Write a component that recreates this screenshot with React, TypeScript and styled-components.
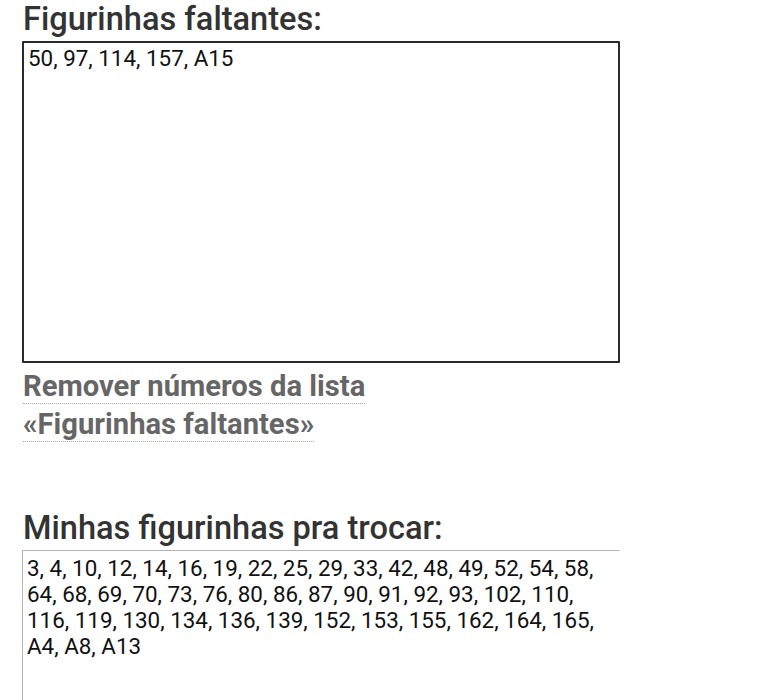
import React from "react";
import styled, { createGlobalStyle } from "styled-components";

const Global = createGlobalStyle`
  html, body { margin: 0; padding: 0; background: #fff; }
  body { font-family: Roboto, "Noto Sans", "Liberation Sans", sans-serif; color: #222; }
`;

const Page = styled.main`
  display: flex;
  flex-direction: column;
  padding: 0 0 0 22px;
  width: 598px;
`;

const Heading = styled.label<{ $top: number }>`
  display: block;
  font-size: 32.6px;
  font-weight: 500;
  line-height: 38px;
  color: #333;
  padding-left: 1px;
  margin: ${(p) => p.$top}px 0 3px;
`;

const Area = styled.textarea<{ $strong?: boolean; $height: number }>`
  box-sizing: border-box;
  width: 598px;
  height: ${(p) => p.$height}px;
  resize: none;
  margin: 0;
  font-family: Roboto, "Noto Sans", "Liberation Sans", sans-serif;
  font-size: 22.4px;
  line-height: 26px;
  color: #111;
  background: #fff;
  outline: none;
  overflow: hidden;
  ${(p) =>
    p.$strong
      ? `border: 2px solid #2a2a2a; border-radius: 1px; padding: 2px 4px;`
      : `border: 1px solid #b5b5b5; border-right-color: transparent; padding: 4px 4px;`}
`;

const RemoveLink = styled.a`
  align-self: flex-start;
  margin-top: 4px;
  padding-left: 1px;
  font-size: 29.2px;
  font-weight: 700;
  line-height: 38px;
  color: #666;
  text-decoration: none;
  cursor: pointer;
`;

const Dotted = styled.span`
  border-bottom: 1px dotted #aaa;
  padding-bottom: 0;
`;

export default function App() {
  return (
    <>
      <Global />
      <Page>
        <Heading $top={0}>Figurinhas faltantes:</Heading>
        <Area $strong $height={322} readOnly defaultValue="50, 97, 114, 157, A15" />
        <RemoveLink>
          <Dotted>Remover números da lista</Dotted>
          <br />
          <Dotted>«Figurinhas faltantes»</Dotted>
        </RemoveLink>
        <Heading $top={66}>Minhas figurinhas pra trocar:</Heading>
        <Area
          $height={200}
          readOnly
          defaultValue="3, 4, 10, 12, 14, 16, 19, 22, 25, 29, 33, 42, 48, 49, 52, 54, 58, 64, 68, 69, 70, 73, 76, 80, 86, 87, 90, 91, 92, 93, 102, 110, 116, 119, 130, 134, 136, 139, 152, 153, 155, 162, 164, 165, A4, A8, A13"
        />
      </Page>
    </>
  );
}
